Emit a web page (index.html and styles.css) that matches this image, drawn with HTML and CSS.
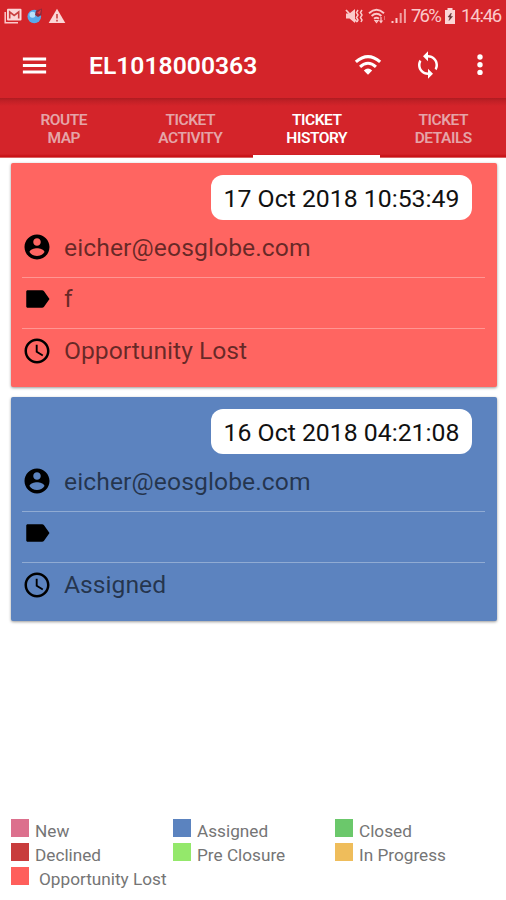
FILE: index.html
```html
<!DOCTYPE html>
<html lang="en">
<head>
<meta charset="utf-8">
<title>EL1018000363</title>
<link rel="stylesheet" href="styles.css">
</head>
<body>
<svg class="defs" width="0" height="0">
  <symbol id="account" viewBox="0 0 24 24"><path d="M12 2C6.48 2 2 6.48 2 12s4.480 10 10 10 10-4.480 10-10S17.520 2 12 2zm0 3c1.660 0 3 1.340 3 3s-1.340 3-3 3-3-1.340-3-3 1.340-3 3-3zm0 14.200c-2.500 0-4.710-1.280-6-3.220.03-1.990 4-3.080 6-3.080 1.990 0 5.970 1.090 6 3.080-1.290 1.940-3.500 3.220-6 3.220z"/></symbol>
  <symbol id="label" viewBox="0 0 24 24"><path d="M17.630 5.840C17.270 5.330 16.670 5 16 5H4.500C3.900 5 3.400 5.500 3.400 6v12c0 .5.500 1 1.100 1H16c.67 0 1.270-.33 1.630-.84L22 12l-4.370-6.160z"/></symbol>
  <symbol id="clock" viewBox="0 0 24 24"><path d="M11.990 2C6.470 2 2 6.480 2 12s4.470 10 9.990 10C17.520 22 22 17.520 22 12S17.520 2 11.990 2zM12 20c-4.420 0-8-3.580-8-8s3.580-8 8-8 8 3.580 8 8-3.580 8-8 8zm.5-13H11v6l5.250 3.150.75-1.230-4.500-2.670z"/></symbol>
</svg>
<header class="appbar">
  <div class="status">
    <svg class="s-mail" viewBox="0 0 18 16"><path d="M1.200 4v10.800H14" fill="none" stroke="#fbc9ca" stroke-width="1.500"/><rect x="3" y="0.800" width="14.500" height="11.700" rx="1" fill="#fbd6d6"/><path d="M5.700 10.500V4l4.500 3.500L14.700 4v6.500" fill="none" stroke="#c9403f" stroke-width="1.600"/></svg>
    <svg class="s-globe" viewBox="0 0 16 16"><circle cx="7.300" cy="8.500" r="6.800" fill="#58a9ea"/><circle cx="5.500" cy="6.800" r="3" fill="#b9e2fb"/><path d="M8 7 9 2.500 15 0.500 14.500 7 11 9z" fill="#8f2a3c"/><path d="M10 5l4-3.500-1 4.500z" fill="#e8383a"/></svg>
    <svg class="s-warn" viewBox="0 0 18 16"><path d="M9 .8 17.300 15H.7z" fill="#fbd6d6"/><path d="M9 6v4.500M9 11.800v1.800" stroke="#c9403f" stroke-width="1.600"/></svg>
    <span class="fill"></span>
    <svg class="s-mute" viewBox="0 0 18 16"><path d="M1 5.500h3.500L10 1v14l-5.500-4.500H1z" fill="#fbc9ca"/><path d="M1 2l11 12" stroke="#fbc9ca" stroke-width="1.800"/><path d="M13 2l-1.500 2.500L13 7l-1.500 2.500L13 12l-1 2M17 2l-1.500 2.500L17 7l-1.500 2.500L17 12l-1 2" fill="none" stroke="#fbc9ca" stroke-width="1.500"/></svg>
    <svg class="s-wifi" viewBox="0 0 18 16"><path d="M1 5.200Q8.500-1.600 16 5.200M3.600 8Q8.500 3.700 13.400 8M6 10.700q2.500-2 5 0" fill="none" stroke="#fbc9ca" stroke-width="1.900"/><path d="M7 12.500h3L8.500 14.500zM13 9v5M11.500 12.500 13 14.500l1.500-2" fill="none" stroke="#fbc9ca" stroke-width="1.200"/><path d="M16.500 12V8" stroke="#e76b6b"/></svg>
    <svg class="s-signal" viewBox="0 0 16 16"><path d="M1.500 13v2M5.500 10v5" stroke="#fbc9ca" stroke-width="2"/><path d="M9.700 5v10M13.900 1v14" stroke="#f0a0a1" stroke-width="2"/></svg>
    <span class="pct">76%</span>
    <svg class="s-batt" viewBox="0 0 12 16"><path d="M3.500 0h5v2H11v14H1V2h2.500z" fill="#fbd6d6"/><path d="M7.300 5 4 9h2L5 12.500 8.500 8.500H6.500z" fill="#613033" stroke="#613033" stroke-width=".5"/></svg>
    <span class="time">14:46</span>
  </div>
  <div class="toolbar">
    <svg class="menu" viewBox="0 0 24 24"><path d="M3 18.100h18v-2.200H3v2.200zm0-5h18v-2.200H3v2.200zm0-7.200v2.200h18V5.900H3z"/></svg>
    <h1>EL1018000363</h1>
    <svg class="wifi" viewBox="0 0 30 24"><path d="M2 8.200Q15-3.400 28 8.200M6.500 13.400Q15 5.800 23.500 13.400" fill="none" stroke="#fff" stroke-width="3.300"/><path d="M10.500 17.300q4.500-4 9 0L15 22z"/></svg>
    <svg class="sync" viewBox="0 0 24 24"><path d="M12 4V1L8 5l4 4V6c3.310 0 6 2.690 6 6 0 1.010-.25 1.970-.7 2.800l1.460 1.460C19.540 15.030 20 13.570 20 12c0-4.420-3.580-8-8-8zm0 14c-3.310 0-6-2.690-6-6 0-1.010.25-1.970.7-2.800L5.240 7.740C4.460 8.970 4 10.430 4 12c0 4.420 3.580 8 8 8v3l4-4-4-4v3z"/></svg>
    <svg class="more" viewBox="0 0 8 22"><circle cx="4" cy="3" r="2.700"/><circle cx="4" cy="10.700" r="2.700"/><circle cx="4" cy="18.400" r="2.700"/></svg>
  </div>
</header>
<nav class="tabs">
  <a class="tab">ROUTE<br>MAP</a>
  <a class="tab">TICKET<br>ACTIVITY</a>
  <a class="tab active">TICKET<br>HISTORY</a>
  <a class="tab">TICKET<br>DETAILS</a>
</nav>
<main class="list">
  <section class="card lost">
    <div class="date"><span>17 Oct 2018 10:53:49</span></div>
    <div class="row"><svg><use href="#account"/></svg><span class="email">eicher@eosglobe.com</span></div>
    <div class="row"><svg><use href="#label"/></svg><span>f</span></div>
    <div class="row"><svg><use href="#clock"/></svg><span>Opportunity Lost</span></div>
  </section>
  <section class="card assigned">
    <div class="date"><span>16 Oct 2018 04:21:08</span></div>
    <div class="row"><svg><use href="#account"/></svg><span class="email">eicher@eosglobe.com</span></div>
    <div class="row"><svg><use href="#label"/></svg><span></span></div>
    <div class="row"><svg><use href="#clock"/></svg><span>Assigned</span></div>
  </section>
</main>
<footer class="legend">
  <div class="key"><i class="c-new"></i><span>New</span></div>
  <div class="key"><i class="c-assigned"></i><span>Assigned</span></div>
  <div class="key"><i class="c-closed"></i><span>Closed</span></div>
  <div class="key"><i class="c-declined"></i><span>Declined</span></div>
  <div class="key"><i class="c-pre"></i><span>Pre Closure</span></div>
  <div class="key"><i class="c-progress"></i><span>In Progress</span></div>
  <div class="key wide"><i class="c-lost"></i><span>Opportunity Lost</span></div>
</footer>
</body>
</html>
```
FILE: styles.css
```css
* { box-sizing: border-box; }
body {
  margin: 0;
  width: 506px;
  height: 900px;
  display: flex;
  flex-direction: column;
  overflow: hidden;
  background: #fff;
  font-family: Roboto, "Liberation Sans", sans-serif;
}
svg { display: block; flex: none; }
.defs { display: none; }
.appbar {
  height: 98px;
  flex: none;
  background: #d4242a;
}
.status {
  display: flex;
  align-items: center;
  height: 32px;
  padding: 0 5px 0 4px;
  color: #fbc9ca;
  font-size: 18.500px;
}
.s-mail { width: 18px; height: 16px; }
.s-globe { width: 16px; height: 16px; margin-left: 5px; }
.s-warn { width: 18px; height: 16px; margin-left: 5px; }
.fill { flex: 1; }
.s-mute { width: 18px; height: 16px; }
.s-wifi { width: 18px; height: 16px; margin-left: 5px; }
.s-signal { width: 16px; height: 16px; margin-left: 5px; }
.pct { width: 30px; margin-left: 4px; letter-spacing: -1.800px; white-space: nowrap; }
.s-batt { width: 12px; height: 16px; margin-left: 3px; }
.time { width: 40px; margin-left: 5px; letter-spacing: -1.200px; white-space: nowrap; }
.toolbar {
  display: flex;
  align-items: center;
  height: 66px;
  padding: 0 22px 0 19px;
  fill: #fff;
  color: #fff;
}
.menu { width: 31px; height: 31px; }
.toolbar h1 {
  flex: 1;
  margin: 0 0 0 39px;
  font-size: 24.700px;
  font-weight: 600;
}
.wifi { width: 28px; height: 23px; }
.sync { width: 30px; height: 30px; margin-left: 31px; }
.more { width: 8px; height: 22px; margin-left: 33px; }
.tabs {
  display: grid;
  grid-template-columns: repeat(4, 1fr);
  flex: none;
  height: 60px;
  background: linear-gradient(#ae1c21 0, #c12026 3px, #d4242a 8px, #d4242a 56px, #c81317 58px, #c81317 59px, #eeb0b0 60px);
}
.tab {
  padding: 13px 0 0 1px;
  border-bottom: 3px solid transparent;
  color: #e5a4a8;
  font-size: 15.500px;
  font-weight: 600;
  letter-spacing: -0.450px;
  line-height: 18px;
  text-align: center;
}
.tab.active { color: #fff; border-color: #fff; }
.list {
  display: flex;
  flex-direction: column;
  gap: 10px;
  padding: 5px 9px 0 11px;
}
.card {
  height: 224px;
  padding: 12px 12px 0 11px;
  border-radius: 2px;
  box-shadow: 0 1px 3px rgba(0, 0, 0, .4);
}
.lost { background: #ff6561; }
.assigned { background: #5c83bf; }
.date { display: flex; justify-content: flex-end; padding-right: 13px; }
.date span {
  width: 261px;
  height: 45px;
  border-radius: 12px;
  background: #fff;
  color: #111;
  font-size: 24.800px;
  line-height: 47px;
  text-align: center;
  white-space: nowrap;
}
.row {
  display: flex;
  align-items: center;
  height: 51px;
  padding-bottom: 9px;
  color: rgba(0, 0, 0, .6);
  font-size: 24.700px;
}
.date + .row { height: 58px; padding-top: 1px; padding-bottom: 4px; }
.row:not(:last-child) { border-bottom: 1px solid rgba(255, 255, 255, .32); }
.row:last-child { padding-bottom: 8px; }
.row svg { width: 30px; height: 30px; fill: #000; }
.row span { margin-left: 12px; white-space: nowrap; }
.email { letter-spacing: .08px; }
.legend {
  display: grid;
  grid-template-columns: 162px 162px 1fr;
  grid-auto-rows: 24px;
  margin-top: auto;
  padding: 0 0 9px 11px;
  color: #757575;
  font-size: 17.200px;
}
.key { display: flex; align-items: flex-start; white-space: nowrap; }
.key i { width: 18px; height: 18px; }
.key span { margin-left: 6px; line-height: 24px; }
.key.wide span { margin-left: 10px; }
.c-new { background: #dc708d; }
.c-assigned { background: #5b83bf; }
.c-closed { background: #6bc86b; }
.c-declined { background: #c83c3c; }
.c-pre { background: #94e86b; }
.c-progress { background: #efbd5b; }
.c-lost { background: #ff5f5b; }
```
